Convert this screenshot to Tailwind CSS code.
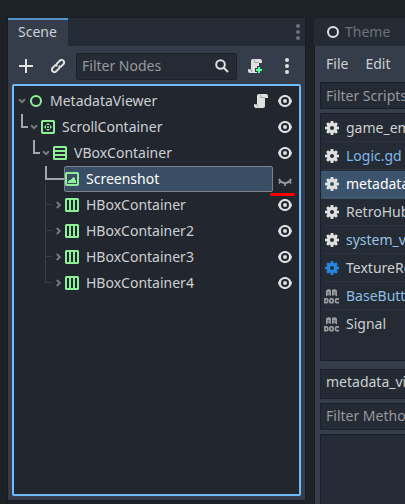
<!DOCTYPE html>
<html lang="en">
<head>
<meta charset="utf-8">
<title>Scene</title>
<script src="https://cdn.jsdelivr.net/npm/@tailwindcss/browser@4"></script>
</head>
<body class="w-[405px] h-[504px] overflow-hidden bg-[#1d2229] text-[14px] leading-[20px] text-[#cdcfd2] font-['Noto_Sans',sans-serif]">
<svg class="hidden">
  <symbol id="eye" viewBox="0 0 14 14"><path fill="#e0e0e0" fill-rule="evenodd" d="M7 1C3.600 1 .9 3.600 0 7c.9 3.400 3.600 6 7 6s6.100-2.600 7-6C13.100 3.600 10.400 1 7 1zM7 3a4 4 0 1 1 0 8 4 4 0 0 1 0-8z"/><circle cx="7" cy="7" r="2" fill="#e0e0e0"/></symbol>
  <symbol id="hbox" viewBox="0 0 14 14"><path fill="#8eef97" fill-rule="evenodd" d="M1.500 0h11A1.500 1.500 0 0 1 14 1.500v11a1.500 1.500 0 0 1-1.500 1.500h-11A1.500 1.500 0 0 1 0 12.500v-11A1.500 1.500 0 0 1 1.500 0zM2 2v10h2V2zM6 2v10h2V2zM10 2v10h2V2z"/></symbol>
  <symbol id="gear" viewBox="0 0 14 14"><g fill="currentColor"><path fill-rule="evenodd" d="M7 2a5 5 0 1 0 0 10A5 5 0 0 0 7 2zM7 5a2 2 0 1 1 0 4 2 2 0 0 1 0-4z"/><path id="teeth" d="M5.700 0h2.600l.5 3H5.200zM5.700 14h2.600l.5-3H5.200zM0 5.700v2.600l3 .5V5.200zM14 5.700v2.600l-3 .5V5.200z"/><use href="#teeth" transform="rotate(45 7 7)"/></g></symbol>
  <symbol id="script" viewBox="0 0 14 14"><path fill="#e0e0e0" d="M5 0h7a2 2 0 0 1 2 2v2h-3v8a2 2 0 0 1-2 2H2a2 2 0 0 1-2-2v-2h3V2a2 2 0 0 1 2-2z"/><path fill="none" stroke="#a8aaad" d="M6.500 .5v3H11M.5 10.500H3.500v2.500"/></symbol>
  <symbol id="doc" viewBox="0 0 15 15"><path fill="#999b9e" d="M2 1.500C3.500 0 6 0 7 1v6C6 6 3.500 6 2 7.500zM8 1c1-1 3.500-1 5 .5v6C11.500 6 9 6 8 7z"/><path stroke="#262c36" d="M3.500 3.500h2M3.500 5h2M9.500 3.500h2M9.500 5h2" stroke-width=".5"/><g fill="none" stroke="#999b9e" stroke-width="1.700"><path d="M.9 9.900h1.600q1.300 0 1.300 1.300v1.200q0 1.300-1.300 1.300H.9z"/><rect x="5.900" y="9.900" width="3.200" height="3.800" rx="1"/><path d="M15 9.900h-2.200q-1.300 0-1.300 1.300v1.200q0 1.300 1.300 1.300H15"/></g></symbol>
  <symbol id="down" viewBox="0 0 8 6"><path d="M1 1.200 4 4.200l3-3" fill="none" stroke="#77797e" stroke-width="2"/></symbol>
  <symbol id="hguide" viewBox="0 0 51 26"><path d="M31.500 0v26M32 12.500h6" stroke="#3b4047"/><path d="M42.800 10l3 3-3 3" fill="none" stroke="#77797e" stroke-width="2"/></symbol>
</svg>
<div class="flex w-[405px] h-[504px] overflow-hidden pt-[18px] pl-[8px]">
  <!-- Scene dock -->
  <section class="w-[297px] h-[482px] shrink-0 flex flex-col bg-[#363d4a] shadow-[0_0_0_1px_#191d23]">
    <header class="h-[28px] flex justify-between bg-[#252b34] rounded-tr-[2px]">
      <div class="w-[60px] h-[28px] border-t-2 border-[#5694c8] bg-[#363d4a] pl-[10px] pt-[2px]">Scene</div>
      <svg class="w-[4px] h-[16px] mr-[5px] mt-[6px]" fill="#6d7178"><circle cx="2" cy="2" r="2"/><circle cx="2" cy="8" r="2"/><circle cx="2" cy="14" r="2"/></svg>
    </header>
    <div class="h-[38px] flex items-center pt-[2px]">
      <svg class="w-[14px] h-[14px] ml-[11px]"><path d="M7 0v14M0 7h14" stroke="#e0e0e0" stroke-width="2"/></svg>
      <svg class="w-[14px] h-[14px] ml-[18px]" viewBox="0 0 14 14" fill="none" stroke="#e0e0e0" stroke-width="2"><g transform="rotate(-45 7 7)"><path d="M7.500 9.500H12A2.500 2.500 0 0 0 12 4.500H8A2.500 2.500 0 0 0 6 6.500"/><path d="M6.500 4.500H2A2.500 2.500 0 0 0 2 9.500H6A2.500 2.500 0 0 0 8 7.500"/></g></svg>
      <div class="w-[161px] h-[27px] ml-[11px] flex items-center justify-between bg-[#252b34] border border-[#1d2229] rounded-[2px] pl-[5px] pr-[7px] text-[#96999e]">Filter Nodes
        <svg class="w-[14px] h-[14px]" fill="none" stroke="#e0e0e0" stroke-width="2"><circle cx="5.500" cy="5.500" r="4.300"/><path d="M8.500 8.500 13 13"/></svg>
      </div>
      <svg class="w-[15px] h-[14px] ml-[11px]" viewBox="0 0 15 14"><use href="#script" width="14" height="14"/><path d="M11 7v7M7 11h8" stroke="#363d4a" stroke-width="4"/><path d="M11 8v6M8 11h6" stroke="#5fff97" stroke-width="2"/></svg>
      <svg class="w-[4px] h-[16px] ml-[22px]" fill="#e0e0e0"><circle cx="2" cy="2" r="2"/><circle cx="2" cy="8" r="2"/><circle cx="2" cy="14" r="2"/></svg>
    </div>
    <div class="relative w-[289px] h-[412px] ml-[4px] border-2 border-[#70bafa] rounded-[2px] bg-[#22272f] pt-[2px]">
      <div class="h-[26px] flex items-center pr-[7px]">
        <svg class="w-[8px] h-[6px] ml-[4px]"><use href="#down"/></svg>
        <svg class="w-[12px] h-[12px] ml-[4px]"><circle cx="6" cy="6" r="5" fill="none" stroke="#8eef97" stroke-width="2"/></svg>
        <span class="ml-[8px] grow">MetadataViewer</span>
        <svg class="w-[14px] h-[14px]"><use href="#script"/></svg>
        <svg class="w-[14px] h-[14px] ml-[10px]"><use href="#eye"/></svg>
      </div>
      <div class="h-[26px] flex items-center pr-[7px]">
        <svg class="w-[27px] h-[26px]"><path d="M8 0v13h6" fill="none" stroke="#a4a6a9" stroke-width="2"/><use href="#down" x="16" y="10" width="8" height="6"/></svg>
        <svg class="w-[14px] h-[14px]" viewBox="0 0 14 14"><rect x="1" y="1" width="12" height="12" rx=".7" fill="none" stroke="#8eef97" stroke-width="2"/><path fill="#8eef97" d="M7 3 9 5H5zM7 11l2-2H5zM3 7l2-2v4zM11 7 9 5v4z"/><rect x="5" y="5" width="4" height="4" fill="#22272f"/><circle cx="7" cy="7" r="1" fill="#8eef97"/></svg>
        <span class="ml-[7px] grow">ScrollContainer</span>
        <svg class="w-[14px] h-[14px]"><use href="#eye"/></svg>
      </div>
      <div class="h-[26px] flex items-center pr-[7px]">
        <svg class="w-[39px] h-[26px]"><path d="M20 0v13h6" fill="none" stroke="#a4a6a9" stroke-width="2"/><use href="#down" x="28" y="10" width="8" height="6"/></svg>
        <svg class="w-[14px] h-[14px]"><use href="#hbox" transform="rotate(90 7 7)" width="14" height="14"/></svg>
        <span class="ml-[7px] grow">VBoxContainer</span>
        <svg class="w-[14px] h-[14px]"><use href="#eye"/></svg>
      </div>
      <div class="h-[26px] flex items-center pr-[7px]">
        <svg class="w-[50px] h-[26px]"><path d="M32 0v13h18" fill="none" stroke="#a4a6a9" stroke-width="2"/><path d="M31.500 16v10" stroke="#3b4047"/></svg>
        <div class="w-[209px] h-[26px] flex items-center bg-[#394e65] border border-[#7d8288] rounded-[2px] text-white">
          <svg class="w-[14px] h-[14px]"><rect x="1" y="1" width="12" height="12" rx=".7" fill="none" stroke="#8eef97" stroke-width="2"/><path fill="#8eef97" d="M3 11V9h1V8h2V7h1V6h1V5h1v1h1v2h1v3z"/></svg>
          <span class="ml-[7px]">Screenshot</span>
        </div>
        <svg class="w-[14px] h-[14px] ml-[5px]" fill="none" stroke="#96999c"><path d="M.9 7Q3 11 7 11T13.100 7" stroke-width="1.900"/><path d="M2.200 9.500 1 11.500M7 11v3M11.800 9.500l1.200 2" stroke-width="1.700"/></svg>
      </div>
      <div class="h-[26px] flex items-center pr-[7px]">
        <svg class="w-[51px] h-[26px]"><use href="#hguide"/></svg><svg class="w-[14px] h-[14px]"><use href="#hbox"/></svg>
        <span class="ml-[7px] grow">HBoxContainer</span><svg class="w-[14px] h-[14px]"><use href="#eye"/></svg>
      </div>
      <div class="h-[26px] flex items-center pr-[7px]">
        <svg class="w-[51px] h-[26px]"><use href="#hguide"/></svg><svg class="w-[14px] h-[14px]"><use href="#hbox"/></svg>
        <span class="ml-[7px] grow">HBoxContainer2</span><svg class="w-[14px] h-[14px]"><use href="#eye"/></svg>
      </div>
      <div class="h-[26px] flex items-center pr-[7px]">
        <svg class="w-[51px] h-[26px]"><use href="#hguide"/></svg><svg class="w-[14px] h-[14px]"><use href="#hbox"/></svg>
        <span class="ml-[7px] grow">HBoxContainer3</span><svg class="w-[14px] h-[14px]"><use href="#eye"/></svg>
      </div>
      <div class="h-[26px] flex items-center pr-[7px]">
        <svg class="w-[51px] h-[26px]"><path d="M31.500 0v12.500H38" fill="none" stroke="#3b4047"/><path d="M42.800 10l3 3-3 3" fill="none" stroke="#77797e" stroke-width="2"/></svg><svg class="w-[14px] h-[14px]"><use href="#hbox"/></svg>
        <span class="ml-[7px] grow">HBoxContainer4</span><svg class="w-[14px] h-[14px]"><use href="#eye"/></svg>
      </div>
      <!-- Marker under the hidden-visibility icon -->
      <div class="absolute left-[256px] top-[107px] w-[25px] h-[3px] rounded-full bg-[#fa0000]"></div>
    </div>
  </section>
  <!-- Script editor -->
  <section class="w-[91px] shrink-0 ml-[9px] h-[486px] flex flex-col overflow-hidden">
    <header class="h-[28px] shrink-0 flex items-center bg-[#252b34] rounded-tl-[2px] pl-[13px] text-[#6f737a]">
      <svg class="w-[12px] h-[12px]"><circle cx="6" cy="6" r="5" fill="none" stroke="#e0e0e0" stroke-width="2"/></svg>
      <span class="ml-[6px]">Theme</span>
    </header>
    <div class="grow ml-[1px] bg-[#363d4a] pl-[5px] shadow-[0_0_0_1px_#191d23] [clip-path:inset(0_0_0_-1px)]">
      <div class="h-[36px] flex items-center gap-[17px] pl-[6px]"><span>File</span><span>Edit</span></div>
      <div class="h-[27px] flex items-center bg-[#252b34] border border-r-0 border-[#1a1e25] rounded-l-[2px] pl-[5px] whitespace-nowrap text-[#96999e]">Filter Scripts</div>
      <div class="h-[248px] mt-[4px] bg-[#252b34] border border-r-0 border-[#1a1e25] rounded-l-[2px] pt-[1px] whitespace-nowrap overflow-hidden">
        <div class="h-[28px] pl-[3px]"><div class="h-[27px] border-b border-[#2f353e] flex items-center pl-[1px]"><svg class="w-[14px] h-[14px] shrink-0 text-[#e0e0e0]"><use href="#gear"/></svg><span class="ml-[7px]">game_em</span></div></div>
        <div class="h-[28px] pl-[3px]"><div class="h-[27px] border-b border-[#2f353e] flex items-center pl-[1px]"><svg class="w-[14px] h-[14px] shrink-0 text-[#e0e0e0]"><use href="#gear"/></svg><span class="ml-[7px] text-[#7eb8ec]">Logic.gd</span></div></div>
        <div class="h-[28px] pl-[3px] bg-[#3b536c]"><div class="h-[27px] border-b border-[#465b72] flex items-center pl-[1px]"><svg class="w-[14px] h-[14px] shrink-0 text-[#e0e0e0]"><use href="#gear"/></svg><span class="ml-[7px] text-white">metadata_</span></div></div>
        <div class="h-[28px] pl-[3px]"><div class="h-[27px] border-b border-[#2f353e] flex items-center pl-[1px]"><svg class="w-[14px] h-[14px] shrink-0 text-[#e0e0e0]"><use href="#gear"/></svg><span class="ml-[7px]">RetroHub</span></div></div>
        <div class="h-[28px] pl-[3px]"><div class="h-[27px] border-b border-[#2f353e] flex items-center pl-[1px]"><svg class="w-[14px] h-[14px] shrink-0 text-[#e0e0e0]"><use href="#gear"/></svg><span class="ml-[7px] text-[#9bc2e4]">system_vi</span></div></div>
        <div class="h-[28px] pl-[3px]"><div class="h-[27px] border-b border-[#2f353e] flex items-center pl-[1px]"><svg class="w-[14px] h-[14px] shrink-0 text-[#2587e0]"><use href="#gear"/></svg><span class="ml-[7px]">TextureRe</span></div></div>
        <div class="h-[28px] pl-[3px]"><div class="h-[27px] border-b border-[#2f353e] flex items-center"><svg class="w-[15px] h-[15px] shrink-0"><use href="#doc"/></svg><span class="ml-[7px] text-[#8fbde6]">BaseButto</span></div></div>
        <div class="h-[28px] pl-[3px]"><div class="h-[27px] border-b border-transparent flex items-center"><svg class="w-[15px] h-[15px] shrink-0"><use href="#doc"/></svg><span class="ml-[7px]">Signal</span></div></div>
      </div>
      <div class="h-[30px] mt-[8px] bg-[#252b34] border border-r-0 border-[#1d2229] pl-[5px] pt-[2px] whitespace-nowrap overflow-hidden">metadata_vi</div>
      <div class="h-[27px] mt-[4px] flex items-center bg-[#252b34] border border-r-0 border-[#1d2229] rounded-l-[2px] pl-[5px] pb-[1px] whitespace-nowrap overflow-hidden text-[#96999e]">Filter Metho</div>
      <div class="h-[80px] mt-[4px] bg-[#252b34] border border-r-0 border-[#1a1e25] rounded-l-[2px]"></div>
    </div>
  </section>
</div>
</body>
</html>
